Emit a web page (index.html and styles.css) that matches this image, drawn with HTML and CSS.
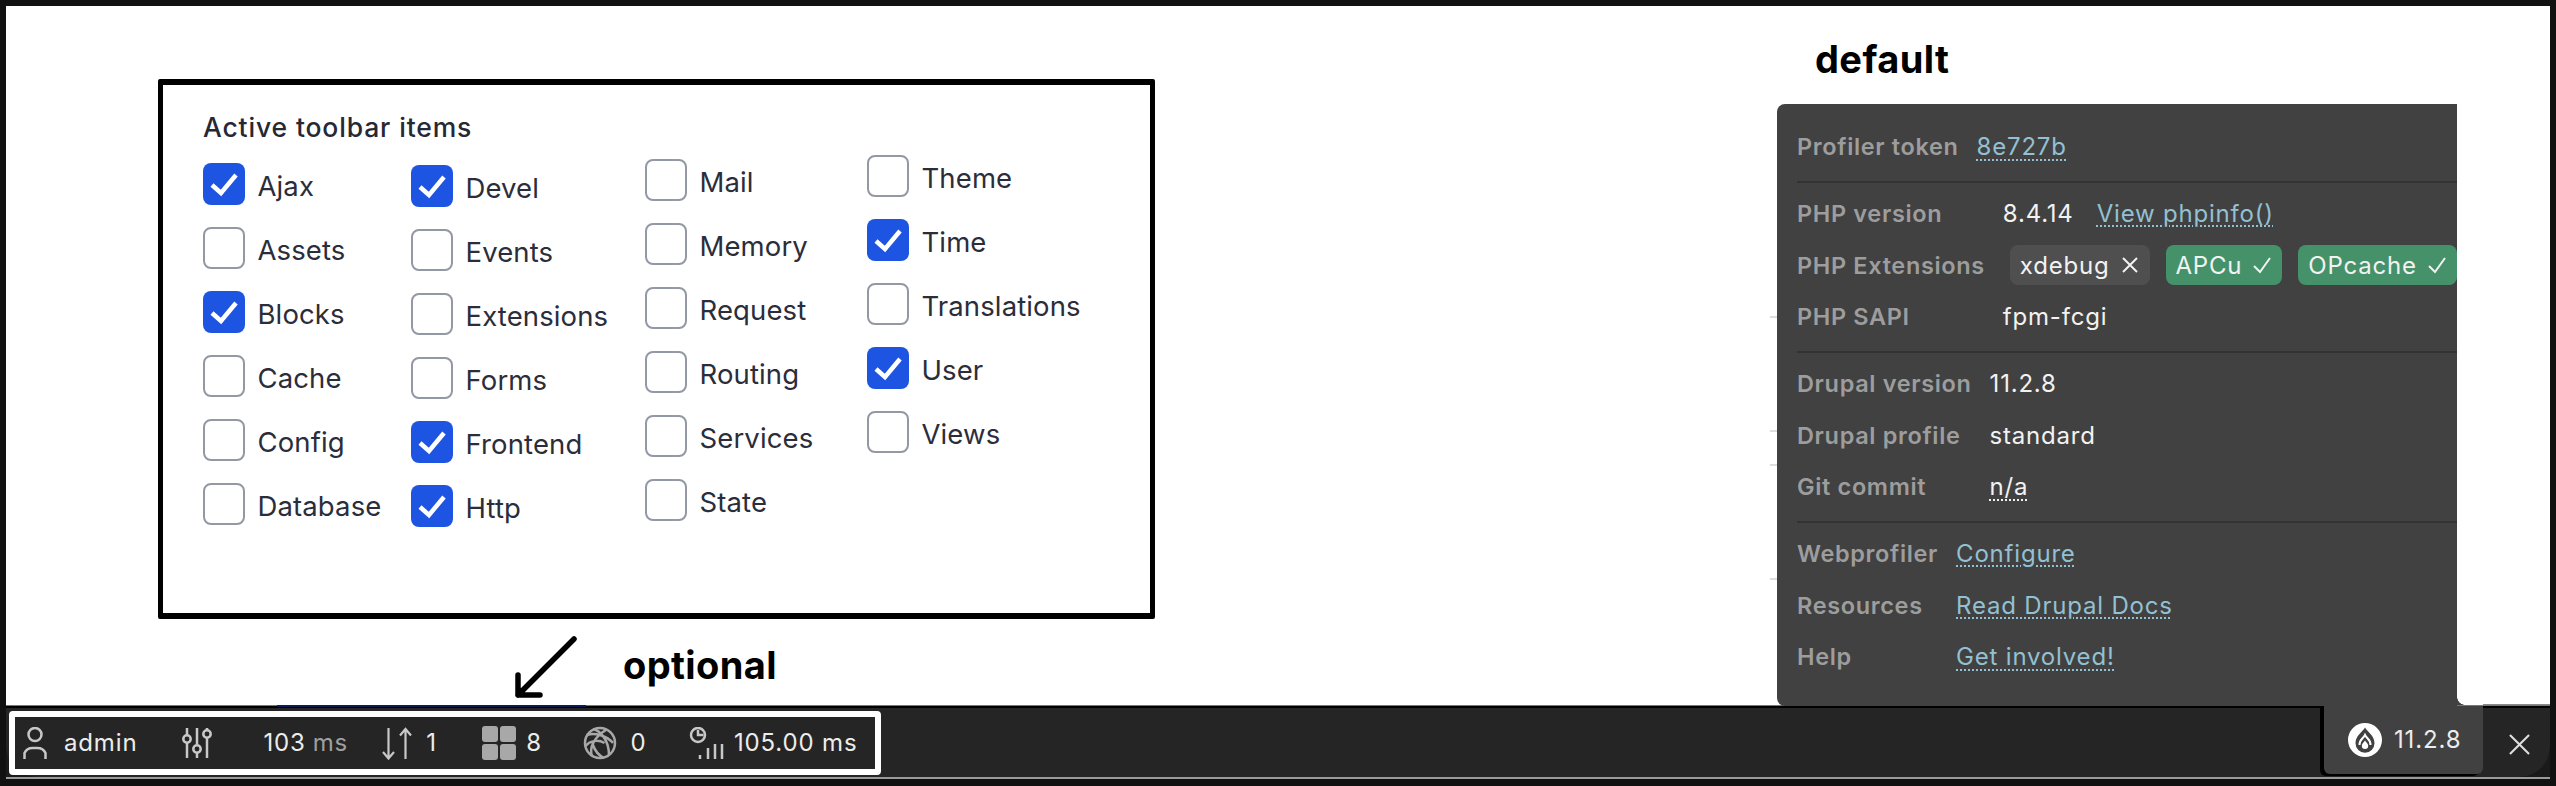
FILE: index.html
```html
<!DOCTYPE html>
<html lang="en">
<head>
<meta charset="utf-8">
<title>Webprofiler toolbar</title>
<link rel="stylesheet" href="styles.css">
</head>
<body>
<div class="canvas">
  <div class="left">
    <section class="settings">
      <h2 class="settings-title">Active toolbar items</h2>
      <div class="cols">
        <div class="col col-1">
          <div class="opt"><span class="box on"><svg viewBox="0 0 42 42"><path d="M9 22l9 8L33 12"/></svg></span>Ajax</div>
          <div class="opt"><span class="box"></span>Assets</div>
          <div class="opt"><span class="box on"><svg viewBox="0 0 42 42"><path d="M9 22l9 8L33 12"/></svg></span>Blocks</div>
          <div class="opt"><span class="box"></span>Cache</div>
          <div class="opt"><span class="box"></span>Config</div>
          <div class="opt"><span class="box"></span>Database</div>
        </div>
        <div class="col col-2">
          <div class="opt"><span class="box on"><svg viewBox="0 0 42 42"><path d="M9 22l9 8L33 12"/></svg></span>Devel</div>
          <div class="opt"><span class="box"></span>Events</div>
          <div class="opt"><span class="box"></span>Extensions</div>
          <div class="opt"><span class="box"></span>Forms</div>
          <div class="opt"><span class="box on"><svg viewBox="0 0 42 42"><path d="M9 22l9 8L33 12"/></svg></span>Frontend</div>
          <div class="opt"><span class="box on"><svg viewBox="0 0 42 42"><path d="M9 22l9 8L33 12"/></svg></span>Http</div>
        </div>
        <div class="col col-3">
          <div class="opt"><span class="box"></span>Mail</div>
          <div class="opt"><span class="box"></span>Memory</div>
          <div class="opt"><span class="box"></span>Request</div>
          <div class="opt"><span class="box"></span>Routing</div>
          <div class="opt"><span class="box"></span>Services</div>
          <div class="opt"><span class="box"></span>State</div>
        </div>
        <div class="col col-4">
          <div class="opt"><span class="box"></span>Theme</div>
          <div class="opt"><span class="box on"><svg viewBox="0 0 42 42"><path d="M9 22l9 8L33 12"/></svg></span>Time</div>
          <div class="opt"><span class="box"></span>Translations</div>
          <div class="opt"><span class="box on"><svg viewBox="0 0 42 42"><path d="M9 22l9 8L33 12"/></svg></span>User</div>
          <div class="opt"><span class="box"></span>Views</div>
        </div>
      </div>
    </section>
    <div class="note-optional">
      <svg class="arrow" viewBox="0 0 64 64"><path d="M59 3L3 59M3 39v20h22"/></svg>
      <span class="note">optional</span>
    </div>
  </div>

  <div class="right">
    <div class="note note-default">default</div>
    <div class="panel">
      <span class="tick tick-1"></span><span class="tick tick-2"></span><span class="tick tick-3"></span><span class="tick tick-4"></span>
      <div class="sec">
        <span class="k">Profiler token</span><span class="v"><a class="lnk">8e727b</a></span>
      </div>
      <div class="sec">
        <span class="k">PHP version</span><span class="v">8.4.14<a class="lnk lnk-php">View phpinfo()</a></span>
        <span class="k">PHP Extensions</span>
        <span class="v tags">
          <span class="tag">xdebug<svg viewBox="0 0 18 18"><path d="M2 2l14 14M16 2L2 16"/></svg></span>
          <span class="tag ok">APCu<svg viewBox="0 0 18 18"><path d="M1 10l6 6L17 2"/></svg></span>
          <span class="tag ok">OPcache<svg viewBox="0 0 18 18"><path d="M1 10l6 6L17 2"/></svg></span>
        </span>
        <span class="k">PHP SAPI</span><span class="v">fpm-fcgi</span>
      </div>
      <div class="sec">
        <span class="k">Drupal version</span><span class="v">11.2.8</span>
        <span class="k">Drupal profile</span><span class="v">standard</span>
        <span class="k">Git commit</span><span class="v"><span class="abbr">n/a</span></span>
      </div>
      <div class="sec sec-last">
        <span class="k">Webprofiler</span><span class="v"><a class="lnk">Configure</a></span>
        <span class="k">Resources</span><span class="v"><a class="lnk">Read Drupal Docs</a></span>
        <span class="k">Help</span><span class="v"><a class="lnk">Get involved!</a></span>
      </div>
    </div>
  </div>
</div>

<footer class="toolbar">
  <span class="accent"></span>
  <div class="hl">
    <svg class="ic ic-user" viewBox="0 0 24 32"><circle cx="12" cy="7.5" r="6.5"/><path d="M1.5 32v-6a9 8 0 0 1 9-5h3a9 8 0 0 1 9 5v6"/></svg>
    <span class="t t-admin">admin</span>
    <svg class="ic ic-sliders" viewBox="0 0 30 30"><path d="M5 0v7M5 15v15M15 0v16M15 25v5M25 0v2M25 10v20"/><circle cx="5" cy="11" r="3.7"/><circle cx="15" cy="21" r="3.7"/><circle cx="25" cy="6" r="3.7"/></svg>
    <span class="t t-103">103</span><span class="t t-ms">ms</span>
    <svg class="ic ic-arrows" viewBox="0 0 30 33"><path d="M6.5 1v30M1 25l5.500 6.500L12 25M23.500 32V2M18 8.500L23.500 2 29 8.500"/></svg>
    <span class="t t-1">1</span>
    <span class="ic-grid"><i></i><i></i><i></i><i></i></span>
    <span class="t t-8">8</span>
    <svg class="ic ic-globe" viewBox="0 0 34 34"><circle cx="17" cy="17" r="15"/><path d="M4 9c8-3 20 1 26 8M10 3c8 2 16 12 16 26M2.500 20c4-5 12-7 19-3M9 30c-3-8 2-19 14-26M21 32c-6-3-9-7-11-13"/></svg>
    <span class="t t-0">0</span>
    <svg class="ic ic-timer" viewBox="0 0 36 33"><circle cx="9" cy="8" r="7"/><path d="M9 3v5h5.500"/><path class="bars" d="M11 32v-4M19 32V21M26 32V17M33 32V17"/></svg>
    <span class="t t-time">105.00 ms</span>
  </div>
  <div class="tab">
    <svg class="drupal" viewBox="-17 -17 34 34"><circle r="17" fill="#fff"/><path fill="#414141" d="M0-12.500C2.500-8 9.500-4.500 9.500 3.200a9.500 9.500 0 0 1-19 0C-9.500-4.500-2.500-8 0-12.500z"/><path fill="none" stroke="#fff" stroke-width="2" d="M-5.500 5C-6-.5-1.500-1.500 0-5 1.500-1.500 6-.5 5.500 5"/><path fill="#fff" d="M0 .5c1 1.700 3.200 3 3.200 5.300a3.200 3.200 0 0 1-6.400 0C-3.200 3.500-1 2.200 0 .5z"/></svg>
    <span class="t">11.2.8</span>
  </div>
  <button class="close" type="button" aria-label="Close"><svg viewBox="0 0 22 22"><path d="M1 1l20 20M21 1L1 21"/></svg></button>
</footer>
</body>
</html>
```

FILE: styles.css
```css
* { box-sizing: border-box; }

html, body { margin: 0; padding: 0; }

body {
  width: 2556px;
  height: 786px;
  overflow: hidden;
  background: #111;
  padding: 6px 6px 0;
  font-family: Inter, "Liberation Sans", sans-serif;
  position: relative;
}

/* ---------- canvas ---------- */
.canvas {
  position: relative;
  display: flex;
  height: 700px;
  background: #fff;
  border-bottom: 1px solid #777;
}

.canvas::after {
  content: "";
  position: absolute;
  right: 0;
  bottom: 0;
  width: 67px;
  height: 1px;
  background: #8a8a8a;
}

.left {
  margin: 73px 0 0 152px;
  width: 997px;
}

.settings {
  height: 540px;
  border-style: solid;
  border-color: #000;
  border-width: 6px 5.500px;
  border-radius: 2px;
  padding: 26px 0 0 40px;
}

.settings-title {
  margin: 0;
  font-size: 26.500px;
  line-height: 32px;
  font-weight: 500;
  letter-spacing: .85px;
  color: #262835;
}

.cols { display: flex; align-items: flex-start; }

.col { display: flex; flex-direction: column; }
.col-1 { width: 208px; margin-top: 21.500px; }
.col-2 { width: 234px; margin-top: 23.500px; }
.col-3 { width: 222px; margin-top: 17.500px; }
.col-4 { margin-top: 13.500px; }

.opt {
  display: flex;
  align-items: center;
  height: 64px;
  padding-bottom: 22px;
  font-size: 27.500px;
  letter-spacing: .12px;
  color: #2b2d3a;
  white-space: nowrap;
}

.box {
  flex: none;
  width: 42px;
  height: 42px;
  margin: -3px 12.500px 0 0;
  border: 2px solid #9498a5;
  border-radius: 8px;
  background: #fff;
}

.box.on { border: 0; background: #1d54e2; }

.box svg { display: block; width: 42px; height: 42px; }

.box path {
  fill: none;
  stroke: #fff;
  stroke-width: 4.500px;
}

.note-optional {
  display: flex;
  align-items: flex-start;
  margin: 17px 0 0 357px;
}

.arrow {
  width: 64px;
  height: 64px;
  flex: none;
}

.arrow path {
  fill: none;
  stroke: #000;
  stroke-width: 5.500px;
  stroke-linecap: round;
  stroke-linejoin: round;
}

.note {
  font-size: 38px;
  line-height: 44px;
  font-weight: 700;
  letter-spacing: .4px;
  color: #000;
}

.note-optional .note { margin: 7px 0 0 44px; }

.right {
  display: flex;
  flex-direction: column;
  margin-left: 622px;
  width: 680px;
}

.note-default {
  margin: 31px 0 0 38px;
  height: 67px;
}

.panel {
  position: relative;
  flex: 1;
  margin-bottom: -1px;
  padding-top: 12px;
  background: #414141;
  border-radius: 8px 0 0 8px;
  color: #f2f2f2;
  font-size: 24px;
  letter-spacing: .8px;
}

.panel::after {
  content: "";
  position: absolute;
  left: 100%;
  bottom: 1px;
  width: 8px;
  height: 8px;
  background: radial-gradient(circle at 100% 0, transparent 7.500px, #414141 8px);
}

.tick {
  position: absolute;
  left: -7px;
  width: 7px;
  height: 2px;
  background: #ddd;
}

.tick-1 { top: 212px; }
.tick-2 { top: 326px; }
.tick-3 { top: 360px; }
.tick-4 { top: 474px; }

.sec {
  display: grid;
  grid-template-columns: max-content 1fr;
  grid-auto-rows: 51.670px;
  column-gap: 18px;
  align-items: center;
  margin-left: 20px;
  padding: 5px 0 8px;
  border-bottom: 2px solid #333;
  white-space: nowrap;
}

.sec-last { border-bottom: 0; }

.k {
  font-weight: 600;
  font-size: 23.500px;
  letter-spacing: .65px;
  color: #9d9d9d;
}

.lnk {
  color: #93c0d2;
  text-decoration: underline dotted 2px;
  text-underline-offset: 4px;
}

.lnk-php { margin-left: 23px; }

.abbr {
  text-decoration: underline dotted 2px;
  text-underline-offset: 4px;
}

.tags {
  display: flex;
  gap: 16px;
  margin-left: 7px;
}

.tag {
  display: flex;
  align-items: center;
  gap: 11px;
  height: 40px;
  padding: 0 11px 0 10px;
  border-radius: 8px;
  background: #4f4f4f;
}

.tag.ok { background: #45926a; }

.tag svg { width: 18px; height: 18px; }

.tag path {
  fill: none;
  stroke: #f2f2f2;
  stroke-width: 2px;
}

/* ---------- toolbar ---------- */
.toolbar {
  position: relative;
  display: flex;
  align-items: flex-start;
  height: 73px;
  border-top: 2px solid #000;
  border-bottom: 2px solid #9a9a9a;
  background: #252525;
  color: #ececec;
}

.toolbar::before,
.toolbar::after {
  content: "";
  position: absolute;
  bottom: 0;
  width: 30px;
  height: 30px;
}

.toolbar::before {
  left: 0;
  background: radial-gradient(circle at 100% 0, transparent 29px, #1a1a1a 30px);
}

.toolbar::after {
  right: 0;
  background: radial-gradient(circle at 0 0, transparent 29px, #1a1a1a 30px);
}

.accent {
  position: absolute;
  left: 271px;
  top: -3px;
  width: 309px;
  height: 2px;
  background: #0b1c55;
}

.hl {
  flex: none;
  position: relative;
  z-index: 1;
  display: flex;
  align-items: center;
  width: 872px;
  height: 64px;
  margin: 3px 0 0 3px;
  border: 6px solid #fff;
  border-radius: 4px;
  background: #252525;
}

.t {
  font-size: 24px;
  line-height: 32px;
  letter-spacing: .85px;
  white-space: nowrap;
}

.ic { flex: none; fill: none; stroke: #c8c8c8; stroke-width: 2.500px; }

.ic-user { width: 24px; height: 32px; margin-left: 8px; }
.t-admin { margin-left: 17px; }
.ic-sliders { width: 30px; height: 30px; margin-left: 45px; }
.t-103 { margin-left: 51px; }
.t-ms { margin-left: 7px; color: #a0a0a0; }
.ic-arrows { width: 30px; height: 33px; margin-left: 34px; stroke-width: 2.200px; }
.t-1 { margin-left: 14px; }

.ic-grid {
  flex: none;
  display: grid;
  grid-template-columns: 16px 16px;
  grid-template-rows: 16px 16px;
  gap: 2px;
  margin-left: 45.500px;
}

.ic-grid i { background: #a8a8a8; border-radius: 3px; }

.t-8 { margin-left: 10px; }
.ic-globe { width: 34px; height: 34px; margin-left: 41.500px; stroke: #a8a8a8; }
.t-0 { margin-left: 13px; }
.ic-timer { width: 36px; height: 33px; margin-left: 42.500px; }
.t-time { margin-left: 9px; }

.tab {
  flex: none;
  position: relative;
  z-index: 1;
  display: flex;
  align-items: center;
  gap: 12px;
  width: 159px;
  height: 68px;
  margin: -2px 0 0 1443px;
  padding: 0 0 0 24px;
  background: #414141;
  border-radius: 0 0 6px 6px;
  box-shadow: -4px 2px 0 #000;
}

.drupal { flex: none; width: 34px; height: 34px; }

.close {
  position: relative;
  z-index: 1;
  flex: none;
  display: flex;
  align-items: center;
  justify-content: center;
  width: 67px;
  height: 72px;
  padding: 0 0 0 5px;
  border: 0;
  background: transparent;
}

.close svg { width: 21px; height: 21px; }

.close path { fill: none; stroke: #ddd; stroke-width: 2.200px; }
```
